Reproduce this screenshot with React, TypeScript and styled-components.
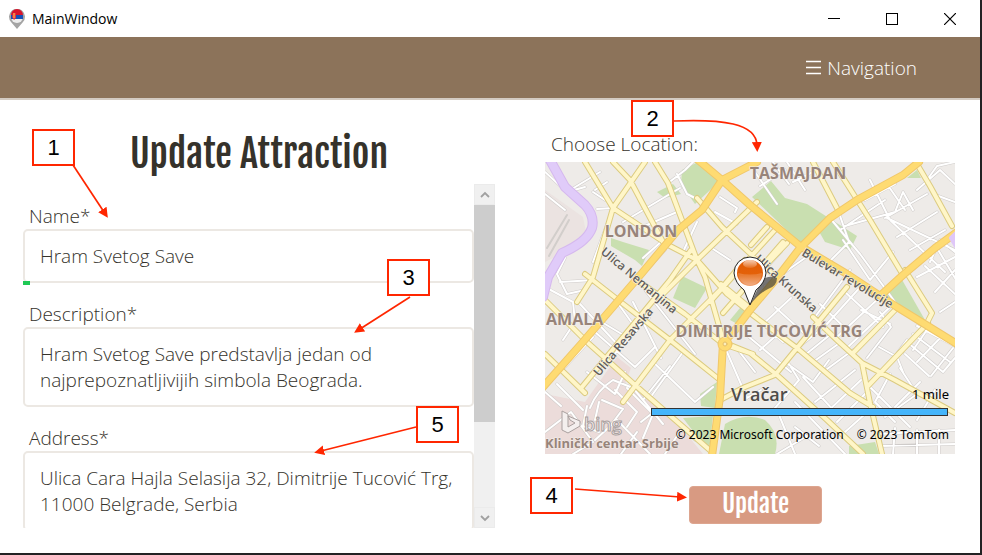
import React from "react";
import styled, { createGlobalStyle } from "styled-components";

const GlobalStyle = createGlobalStyle`
  *, *::before, *::after { box-sizing: border-box; }
  body { margin: 0; background: #222; }
`;

const bodyFont = `"Open Sans", "Noto Sans", sans-serif`;
const headingFont = `"Fjalla One", "Liberation Sans Narrow", "Roboto Condensed", "Open Sans Condensed", sans-serif`;

const Window = styled.div`
  position: relative;
  display: flex;
  flex-direction: column;
  height: 100vh;
  background: #fff;
  border: solid #232224;
  border-width: 0 2px 2px 0;
  font-family: ${bodyFont};
  font-weight: 300;
  color: #35322b;
`;

const TitleBar = styled.header`
  display: flex;
  align-items: center;
  height: 37px;
  padding: 0 4px 0 8px;
  gap: 6px;
  flex: none;
`;

const AppTitle = styled.span`
  flex: 1;
  font: 400 14px/20px "Open Sans", "Noto Sans", sans-serif;
  color: #000;
`;

const CaptionButton = styled.button`
  display: grid;
  place-items: center;
  width: 52px;
  height: 36px;
  padding: 0;
  border: 0;
  background: none;
`;

const NavBar = styled.nav`
  display: flex;
  align-items: center;
  justify-content: flex-end;
  flex: none;
  height: 63px;
  padding-right: 63px;
  background: #8c735a;
  border-bottom: 2px solid #d3cbc2;
`;

const NavButton = styled.button`
  display: flex;
  align-items: center;
  gap: 6px;
  padding: 0;
  border: 0;
  background: none;
  color: #fff;
  font: 300 19px/26px ${bodyFont};
`;

const Content = styled.main`
  flex: 1;
  min-height: 0;
  display: grid;
  grid-template-columns: minmax(0, 472fr) minmax(0, 410fr);
  gap: 50px;
  padding: 0 25px 25px 23px;
`;

const Column = styled.section`
  display: flex;
  flex-direction: column;
  min-height: 0;
`;

const Heading = styled.h1`
  flex: none;
  margin: 0;
  padding-top: 24px;
  height: 84px;
  text-align: center;
  font: 400 38px/60px ${headingFont};
  color: #35322b;
`;

const Scroller = styled.div`
  flex: 1;
  min-height: 0;
  display: flex;
`;

const Fields = styled.form`
  flex: 1;
  min-width: 0;
  padding-top: 19px;
  overflow: hidden;
  display: flex;
  flex-direction: column;
  gap: 18px;
`;

const Field = styled.div`
  position: relative;
  display: flex;
  flex-direction: column;
  flex: none;
`;

const Label = styled.label`
  padding-left: 6px;
  font: 300 19px/26px ${bodyFont};
  color: #35322b;
`;

const fieldBox = `
  width: 100%;
  margin: 0;
  border: 2px solid #ece8e3;
  border-radius: 5px;
  background: #fff;
  color: #35322b;
  outline: 0;
  font: 300 19px/26px ${bodyFont};
`;

const TextInput = styled.input`
  ${fieldBox}
  height: 54px;
  padding: 0 15px;
`;

const TextArea = styled.textarea`
  ${fieldBox}
  display: block;
  padding: 12px 15px;
  resize: none;
  overflow: hidden;
`;

const ValidMark = styled.span`
  position: absolute;
  left: 0;
  bottom: -2px;
  width: 7px;
  height: 4px;
  background: #1fc955;
`;

const ScrollTrack = styled.div`
  display: flex;
  flex-direction: column;
  width: 21px;
  background: #f0f0f0;
`;

const ScrollButton = styled.button`
  display: grid;
  place-items: center;
  flex: none;
  height: 21px;
  padding: 0;
  border: 1px solid #ebebeb;
  background: #f0f0f0;
`;

const ScrollSpan = styled.div`
  flex: 1;
`;

const ScrollThumb = styled.div`
  height: 72%;
  background: #cdcdcd;
`;

const LocationLabel = styled.h2`
  margin: 0;
  padding: 31px 6px 5px;
  font: 300 19px/26px ${bodyFont};
  color: #35322b;
`;

const MapFrame = styled.div`
  position: relative;
  height: 292px;
  flex: none;
  overflow: hidden;
  background: #eeebe7;
`;

const MapDrawing = styled.svg`
  display: block;
  width: 100%;
  height: 100%;
`;

const MapInfo = styled.div`
  position: absolute;
  right: 6px;
  bottom: 9px;
  left: 106px;
  display: flex;
  flex-direction: column;
  align-items: flex-end;
  font: 400 12px/20px "Noto Sans", sans-serif;
  color: #000;
`;

const Distance = styled.span`
  font-size: 13px;
`;

const ScaleBar = styled.div`
  align-self: stretch;
  height: 8px;
  margin: 4px 1px 9px 0;
  border: 1px solid #333;
  background: #45b5fb;
`;

const Credits = styled.div`
  display: flex;
  gap: 13px;
  white-space: nowrap;
`;

const Actions = styled.div`
  display: flex;
  justify-content: center;
  padding: 32px 0 0 11px;
`;

const UpdateButton = styled.button`
  width: 133px;
  height: 38px;
  padding: 0 0 2px;
  border: 1px solid #dda58f;
  border-radius: 4px;
  background: #d89a82;
  color: #fff;
  font: 400 25px/34px ${headingFont};
`;

const Annotations = styled.div`
  position: absolute;
  inset: 0;
  pointer-events: none;
`;

const Arrows = styled.svg`
  position: absolute;
  left: 0;
  top: 0;
`;

const Callout = styled.span<{ $x: number; $y: number }>`
  position: absolute;
  left: ${(p) => p.$x}px;
  top: ${(p) => p.$y}px;
  width: 43px;
  height: 37px;
  border: 2px solid #ff2600;
  background: #fff;
  color: #000;
  text-align: center;
  font: 400 22px/33px "Liberation Sans", sans-serif;
`;

const callouts = [
  { n: 1, x: 32, y: 129 },
  { n: 2, x: 631, y: 100 },
  { n: 3, x: 387, y: 259 },
  { n: 4, x: 530, y: 477 },
  { n: 5, x: 416, y: 406 },
];

const arrows = [
  "M73 165L104 212",
  "M674 121C722 119 756 123 757 145",
  "M410 297L360 329",
  "M575 489L680 497",
  "M416 427L321 451",
];

const minorRoads = [
  "M0 10L22 30L40 25M22 30L55 10M0 32L20 48M50 28L62 20M48 30L60 38M52 47L68 46M68 46L48 100",
  "M118 78L98 96M95 66L132 50M78 60L135 26M122 22L140 8L148 0M132 12L142 32L158 40",
  "M170 50L192 62M175 35L192 46L190 50M100 110L120 88M137 92L152 60M165 85L185 98",
  "M20 96L12 112L22 132L40 128M15 120L50 118M0 125L28 140L30 160L18 178M35 142L72 182",
  "M50 156L80 174L104 156M72 140L92 168L60 202M88 140L116 196M100 128L150 192M20 205L48 175",
  "M50 170L90 205L110 185M108 200L150 240L168 225M125 204L98 238M138 190L105 236L150 278",
  "M42 210L70 232L80 210M12 222L38 248M0 230L16 244M42 244L38 264L54 270M54 240L50 258",
  "M45 246Q52 228 68 218L88 226L118 262M57 238L78 247L66 263M70 228L92 250L82 265M82 226L108 252L98 276",
  "M0 270L26 250L48 280L28 292M50 278L72 258L105 292M76 292L92 270M120 292L136 268M115 245L96 260",
  "M210 10L232 42M215 24L240 8M228 0L244 22M242 0L260 28M248 20L268 10M210 118L236 90M220 124L260 96",
  "M285 56L315 92L350 140M295 68L340 38M293 48L304 80L280 104M298 78L325 118L348 90M300 64L350 50",
  "M325 18L345 58L400 110M342 22L360 48M320 38L350 22M340 56L382 32M342 56L410 88M350 50L358 30L368 48",
  "M372 28L395 8L410 22M382 18L392 4L410 0M388 32L410 40M352 75L392 50M365 88L400 68M385 100L395 78L410 90",
  "M372 115L410 95M390 130L410 108M380 104L410 132M395 150L410 140M392 86L410 116",
  "M270 155L305 108M282 162L318 122M293 174L334 136M303 185L344 146M275 142L302 168M300 130L338 165M316 148L345 162",
  "M322 196L346 165L335 150M340 208L362 178M334 185L352 195L358 210M362 180L398 210L410 196",
  "M368 172L405 200M360 192L384 214M372 164L410 184M384 165L368 188M398 173L372 200M408 186L386 214",
  "M230 145L262 174M218 162L246 136M212 157L238 180M204 175L246 210M215 188L235 170M240 200L268 220L284 198",
  "M252 186L278 166M260 193L286 172M268 200L296 180M278 210L308 188M258 215L290 250M270 240L310 208M282 250L316 218",
  "M292 260L322 230M300 270L328 245M244 202L254 218L230 246M182 190L202 236L216 228M190 184L210 210",
  "M345 212L330 240L350 260M355 206L372 232L340 255M325 225L365 265M375 220L350 245M390 228L372 258",
  "M335 272L410 268M336 284L410 282M350 266L348 292M372 268L372 292M394 268L394 292",
  "M232 248L250 292M250 240L300 292M262 274L232 292M274 284L250 265",
];

const yellowRoads = [
  "M40 0L68 46L125 84L152 98",
  "M100 0L68 46L48 115L32 140",
  "M68 0L85 18L118 80",
  "M110 0L123 21L152 98L160 115L178 178",
  "M115 135L152 98L212 40",
  "M152 36L177 65L212 98L232 116",
  "M230 68L190 112L165 140",
  "M242 81L205 120L178 151",
  "M176 122L205 146",
  "M0 138L42 180L90 223L167 290",
  "M40 112L77 141L125 178L175 218",
  "M146 88L125 118L37 225",
  "M200 98L175 128L125 178L78 240",
  "M0 192L40 231",
  "M92 118L140 152L178 182L208 192",
  "M152 98L182 132L212 156",
  "M205 151L252 186L305 231L328 245",
  "M175 238L200 225L230 213L252 186L302 125",
  "M178 180L205 191L232 213L282 258L318 292",
  "M268 155L292 178L317 201L350 218L410 251",
  "M317 201L325 241L337 292",
  "M383 161L322 225",
  "M352 146L308 191",
  "M360 108L387 151L382 161",
  "M268 0L293 48",
  "M288 0L325 58L358 113",
  "M372 2L385 24L407 64",
  "M222 65L206 83M238 80L212 110",
];

const mainRoads = [
  "M153 -2L177 18L205 43L255 84L302 112L352 145L412 182",
  "M212 0L177 18L157 48L133 68L97 111L37 181L-2 225",
  "M374 0L358 13L312 38L285 56L255 86L232 116L205 148L190 168L178 181L175 235L167 294",
  "M412 70L390 86L358 113L335 134",
];

const joined = (paths: string[]) => paths.join("");

const CityMap = () => (
  <MapDrawing viewBox="0 0 410 292" preserveAspectRatio="xMidYMid slice" role="img" aria-label="Map of Belgrade">
    <defs>
      <linearGradient id="pinFill" x1="0" y1="0" x2="0" y2="1">
        <stop offset="0" stopColor="#e25a06" />
        <stop offset="0.6" stopColor="#e46209" />
        <stop offset="1" stopColor="#f0a070" />
      </linearGradient>
      <linearGradient id="pinGloss" x1="0" y1="0" x2="0" y2="1">
        <stop offset="0" stopColor="#fff" stopOpacity="0.7" />
        <stop offset="1" stopColor="#fff" stopOpacity="0.1" />
      </linearGradient>
    </defs>
    <rect width="410" height="292" fill="#eeebe8" />
    <path d="M0 28L38 55L42 75L8 96L0 100Z" fill="#ebe3e1" />
    <path d="M0 232L40 240L72 195L86 206L80 222L120 246L158 292H0Z" fill="#ecdcda" />
    <g fill="#c9dfb0">
      <path d="M137 8L153 0L174 20L150 42L136 22Z" />
      <path d="M112 30L128 22L136 32L120 36Z" />
      <path d="M66 76L78 80L104 88L97 104L90 98L66 84Z" />
      <path d="M207 35L226 19L240 36L262 42L312 74L305 88L280 80L272 66L256 82Z" />
      <path d="M137 114L162 126L150 146L128 136Z" />
      <path d="M185 158L195 146L207 144L196 164Z" />
      <path d="M338 130L356 116L380 158L352 145Z" />
      <path d="M155 232L172 220L170 246L156 244Z" />
      <path d="M138 256L168 254L164 290Z" />
      <path d="M180 262Q200 250 220 258Q236 272 230 292H174Z" />
      <path d="M304 284L330 280L334 292H304Z" />
      <path d="M362 16L372 8L376 16Z" />
    </g>
    <g fill="none" strokeLinejoin="round" strokeLinecap="round">
      <path d={joined(minorRoads)} stroke="#cfccca" strokeWidth="3" />
      <path d={joined(minorRoads)} stroke="#fff" strokeWidth="2" />
      <path d={joined(yellowRoads)} stroke="#dccb80" strokeWidth="6" />
      <path d={joined(yellowRoads)} stroke="#fff6c8" strokeWidth="4" />
      <path d={joined(mainRoads)} stroke="#f0c76a" strokeWidth="8" />
      <path d={joined(mainRoads)} stroke="#fedb72" strokeWidth="6" />
      <path d="M5 -2L20 25L40 43Q50 54 47 66Q42 80 17 91L3 115L-2 135" stroke="#d5b8ee" strokeWidth="10" />
      <path d="M5 -2L20 25L40 43Q50 54 47 66Q42 80 17 91L3 115L-2 135" stroke="#e0cbf9" strokeWidth="8" />
      <path d="M412 70L406 76L412 86" fill="#dfc7f8" stroke="#dfc7f8" strokeWidth="4" />
      <circle cx="180" cy="182" r="7" fill="#fedb72" stroke="#f0c76a" />
      <circle cx="180" cy="182" r="2" fill="#fbeebb" stroke="#e5bf6a" />
      <path d="M2 86L22 53M4 94L24 58" stroke="#d2cecb" strokeWidth="2" />
    </g>
    <g
      fontFamily="Open Sans, Noto Sans, sans-serif"
      fontWeight="700"
      fontSize="16"
      fill="#98847a"
      stroke="#f4f0ec"
      strokeWidth="1"
      paintOrder="stroke"
    >
      <text x="253" y="17" textAnchor="middle">TAŠMAJDAN</text>
      <text x="96" y="75" textAnchor="middle">LONDON</text>
      <text x="1" y="163">AMALA</text>
      <text x="224" y="175" textAnchor="middle">DIMITRIJE TUCOVIĆ TRG</text>
      <text x="0" y="286" fontSize="13">Klinički centar Srbije</text>
    </g>
    <g
      fontFamily="Open Sans, Noto Sans, sans-serif"
      fontWeight="600"
      fontSize="12"
      fill="#625e5a"
      stroke="#f6f3ec"
      strokeWidth="1"
      paintOrder="stroke"
    >
      <text transform="translate(55 91) rotate(40)">Ulica Nemanjina</text>
      <text transform="translate(54 215) rotate(-50)">Ulica Resavska</text>
      <text transform="translate(256 93) rotate(31)">Bulevar revolucije</text>
      <text transform="translate(209 98) rotate(42)">Ulica Krunska</text>
      <text x="186" y="239" fontSize="18" fill="#4e4c4a">Vračar</text>
    </g>
    <g fill="#f4efee" stroke="#a9a09f" strokeWidth="1">
      <path d="M17 249L23 252V265L30 261L25 258L23 254L35 259V264L23 271L17 268Z" />
      <text x="39" y="269" fontFamily="Open Sans, sans-serif" fontSize="18" fontWeight="600">bing</text>
    </g>
    <path d="M205 143L215 122Q220 112 232 116Q232 124 223 127Q213 132 205 143Z" fill="#333" opacity="0.65" />
    <path
      d="M205 143L199 128Q190 121 189 111A16 16 0 0 1 221 111Q220 121 211 128Z"
      fill="#fff"
      stroke="#222"
      strokeWidth="1"
    />
    <circle cx="205" cy="111" r="13" fill="url(#pinFill)" />
    <ellipse cx="205" cy="102" rx="7" ry="4" fill="url(#pinGloss)" />
    <path d="M193 111Q205 114 217 111A12 12 0 0 1 193 111Z" fill="#fff" opacity="0.18" />
  </MapDrawing>
);

const SerbiaPin = () => (
  <svg width="18" height="20" viewBox="0 0 18 20" aria-hidden="true">
    <path d="M9 20L3 13A8 8 0 1 1 15 13Z" fill="#a5a5a5" />
    <circle cx="9" cy="8" r="6" fill="#eee" />
    <path d="M3 6A6 6 0 0 1 15 6Z" fill="#d8152c" />
    <path d="M3 6H15V10H3Z" fill="#1650b8" />
    <path d="M5 4H8V9L6 11L4 8Z" fill="#e8323c" />
    <path d="M6 4V9" stroke="#ffd34e" strokeWidth="1" />
  </svg>
);

export default function App() {
  return (
    <>
      <GlobalStyle />
      <Window>
        <TitleBar>
          <SerbiaPin />
          <AppTitle>MainWindow</AppTitle>
          <CaptionButton aria-label="Minimize">
            <svg width="12" height="12"><path d="M0 5.5H12" stroke="#000" /></svg>
          </CaptionButton>
          <CaptionButton aria-label="Maximize">
            <svg width="12" height="12"><rect x="0.5" y="0.5" width="11" height="11" fill="none" stroke="#000" /></svg>
          </CaptionButton>
          <CaptionButton aria-label="Close">
            <svg width="12" height="12"><path d="M0 0L12 12M12 0L0 12" stroke="#000" strokeWidth="1.2" /></svg>
          </CaptionButton>
        </TitleBar>
        <NavBar>
          <NavButton>
            <svg width="15" height="15" viewBox="0 0 15 15" aria-hidden="true">
              <path d="M0 1.5H15M0 7.5H15M0 13.5H15" stroke="#fff" strokeWidth="1.3" />
            </svg>
            Navigation
          </NavButton>
        </NavBar>
        <Content>
          <Column>
            <Heading>Update Attraction</Heading>
            <Scroller>
              <Fields id="attraction" onSubmit={(e) => e.preventDefault()}>
                <Field>
                  <Label htmlFor="name">Name*</Label>
                  <TextInput id="name" defaultValue="Hram Svetog Save" spellCheck={false} />
                  <ValidMark />
                </Field>
                <Field>
                  <Label htmlFor="description">Description*</Label>
                  <TextArea
                    id="description"
                    rows={2}
                    spellCheck={false}
                    defaultValue="Hram Svetog Save predstavlja jedan od najprepoznatljivijih simbola Beograda."
                  />
                </Field>
                <Field>
                  <Label htmlFor="address">Address*</Label>
                  <TextArea
                    id="address"
                    rows={2}
                    spellCheck={false}
                    defaultValue="Ulica Cara Hajla Selasija 32, Dimitrije Tucović Trg, 11000 Belgrade, Serbia"
                  />
                </Field>
              </Fields>
              <ScrollTrack>
                <ScrollButton aria-label="Scroll up">
                  <svg width="10" height="8"><path d="M1 6L5 2L9 6" fill="none" stroke="#a0a0a0" strokeWidth="1.8" /></svg>
                </ScrollButton>
                <ScrollSpan><ScrollThumb /></ScrollSpan>
                <ScrollButton aria-label="Scroll down">
                  <svg width="10" height="8"><path d="M1 2L5 6L9 2" fill="none" stroke="#a0a0a0" strokeWidth="1.8" /></svg>
                </ScrollButton>
              </ScrollTrack>
            </Scroller>
          </Column>
          <Column>
            <LocationLabel>Choose Location:</LocationLabel>
            <MapFrame>
              <CityMap />
              <MapInfo>
                <Distance>1 mile</Distance>
                <ScaleBar />
                <Credits>
                  <span>© 2023 Microsoft Corporation</span>
                  <span>© 2023 TomTom</span>
                </Credits>
              </MapInfo>
            </MapFrame>
            <Actions>
              <UpdateButton type="submit" form="attraction">Update</UpdateButton>
            </Actions>
          </Column>
        </Content>
        <Annotations>
          {callouts.map((c) => (
            <Callout key={c.n} $x={c.x} $y={c.y}>{c.n}</Callout>
          ))}
          <Arrows width="980" height="553" viewBox="0 0 980 553" aria-hidden="true">
            <defs>
              <marker id="head" markerWidth="10" markerHeight="10" refX="3" refY="5" orient="auto" markerUnits="userSpaceOnUse">
                <path d="M0 0L10 5L0 10Z" fill="#ff2600" />
              </marker>
            </defs>
            {arrows.map((d) => (
              <path key={d} d={d} fill="none" stroke="#ff2600" strokeWidth="1.7" markerEnd="url(#head)" />
            ))}
          </Arrows>
        </Annotations>
      </Window>
    </>
  );
}
